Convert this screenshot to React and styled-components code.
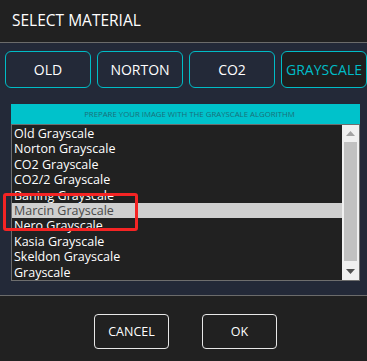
import React, { useState } from 'react';
import styled, { createGlobalStyle } from 'styled-components';

const GlobalStyle = createGlobalStyle`
  html, body {
    margin: 0;
    padding: 0;
    background: #212121;
  }
  * {
    box-sizing: border-box;
  }
`;

const Dialog = styled.div`
  position: relative;
  width: 367px;
  height: 361px;
  overflow: hidden;
  display: flex;
  flex-direction: column;
  font-family: "Open Sans", "Noto Sans", sans-serif;
  color: #ffffff;
  background: #212121;
`;

const Header = styled.div`
  height: 43px;
  flex-shrink: 0;
  display: flex;
  align-items: center;
  padding: 0 0 2px 12px;
  font-size: 15.5px;
  border-bottom: 1px solid #6b6b6b;
`;

const Body = styled.div`
  height: 253px;
  flex-shrink: 0;
  background: #232938;
  padding: 8px 0 0 5px;
  border-bottom: 1px solid #6b6b6b;
`;

const Tabs = styled.div`
  display: flex;
  gap: 6px;
  white-space: nowrap;
`;

const Tab = styled.button`
  flex-shrink: 0;
  width: 86px;
  height: 37px;
  padding: 0;
  border: 1.5px solid #00bcc6;
  border-radius: 6px;
  background: ${(p) => (p.active ? '#1e1e1e' : '#232938')};
  color: ${(p) => (p.active ? '#00bcc6' : '#ffffff')};
  font-family: inherit;
  font-size: 14px;
  overflow: hidden;
  cursor: pointer;
`;

const Panel = styled.div`
  margin: 16px 0 0 6px;
  width: 349px;
`;

const Banner = styled.div`
  height: 20px;
  background: #00c2cb;
  color: #1b6f7a;
  font-size: 7.8px;
  display: flex;
  align-items: center;
  justify-content: center;
  padding-left: 8px;
`;

const List = styled.div`
  height: 157px;
  display: flex;
  border: 1px solid #6e6e6e;
  background: #212121;
`;

const Items = styled.div`
  flex: 1;
  padding-top: 1px;
  overflow: hidden;
`;

const Item = styled.div`
  height: 15.4px;
  line-height: 15.4px;
  padding-left: 2px;
  font-size: 12.5px;
  white-space: nowrap;
  background: ${(p) => (p.selected ? '#cfcfcf' : 'transparent')};
  color: ${(p) => (p.selected ? '#4a4a4a' : '#ffffff')};
  cursor: default;
`;

const Scrollbar = styled.div`
  width: 17px;
  flex-shrink: 0;
  background: #f0f0f0;
  display: flex;
  flex-direction: column;
  align-items: center;
  padding: 0 2px;
`;

const Arrow = styled.div`
  height: 17px;
  flex-shrink: 0;
  display: flex;
  align-items: center;
  justify-content: center;
`;

const Thumb = styled.div`
  flex: 1;
  width: 13px;
  background: #c1c1c1;
  margin: 0 0 2px;
`;

const Highlight = styled.div`
  position: absolute;
  left: 3px;
  top: 193px;
  width: 135px;
  height: 38px;
  border: 3px solid #f52424;
  border-radius: 3px;
  pointer-events: none;
`;

const Footer = styled.div`
  flex: 1;
  display: flex;
  justify-content: center;
  align-items: flex-start;
  gap: 33px;
  padding: 18px 0 0 4px;
`;

const ActionButton = styled.button`
  width: 75px;
  height: 35px;
  border: 1.5px solid #e8e8e8;
  border-radius: 4px;
  background: transparent;
  color: #ffffff;
  font-family: inherit;
  font-size: 12.5px;
  cursor: pointer;
`;

const tabs = ['OLD', 'NORTON', 'CO2', 'GRAYSCALE'];

const materials = [
  'Old Grayscale',
  'Norton Grayscale',
  'CO2 Grayscale',
  'CO2/2 Grayscale',
  'Baning Grayscale',
  'Marcin Grayscale',
  'Nero Grayscale',
  'Kasia Grayscale',
  'Skeldon Grayscale',
  'Grayscale',
];

export default function App() {
  const [tab, setTab] = useState('GRAYSCALE');
  const [selected, setSelected] = useState('Marcin Grayscale');

  return (
    <>
      <GlobalStyle />
      <Dialog>
        <Header>SELECT MATERIAL</Header>
        <Body>
          <Tabs>
            {tabs.map((t) => (
              <Tab key={t} active={t === tab} onClick={() => setTab(t)}>
                {t}
              </Tab>
            ))}
          </Tabs>
          <Panel>
            <Banner>PREPARE YOUR IMAGE WITH THE GRAYSCALE ALGORITHM</Banner>
            <List>
              <Items>
                {materials.map((m) => (
                  <Item key={m} selected={m === selected} onClick={() => setSelected(m)}>
                    {m}
                  </Item>
                ))}
              </Items>
              <Scrollbar>
                <Arrow>
                  <svg width="9" height="5" viewBox="0 0 9 5">
                    <path d="M0 5 L4.5 0 L9 5 Z" fill="#a3a3a3" />
                  </svg>
                </Arrow>
                <Thumb />
                <Arrow>
                  <svg width="9" height="5" viewBox="0 0 9 5">
                    <path d="M0 0 L9 0 L4.5 5 Z" fill="#505050" />
                  </svg>
                </Arrow>
              </Scrollbar>
            </List>
          </Panel>
        </Body>
        <Footer>
          <ActionButton>CANCEL</ActionButton>
          <ActionButton>OK</ActionButton>
        </Footer>
        <Highlight />
      </Dialog>
    </>
  );
}
